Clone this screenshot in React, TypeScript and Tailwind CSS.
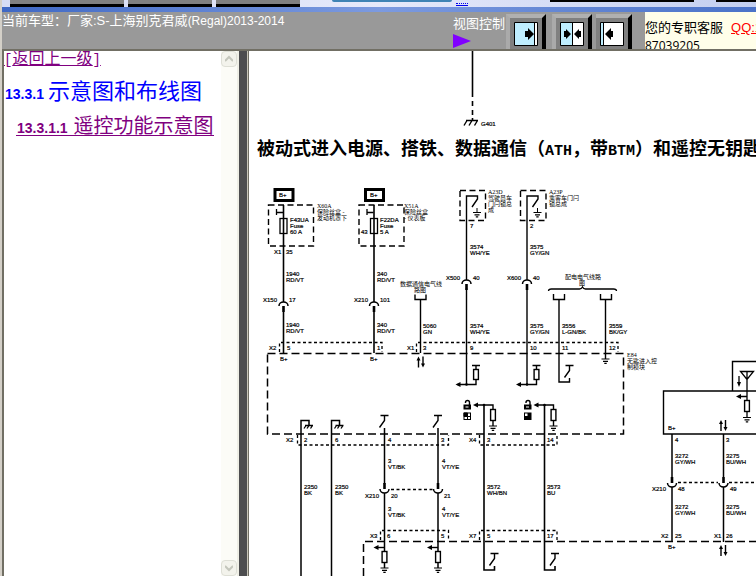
import React from "react";

const SANS = "font-['Liberation_Sans','Noto_Sans_CJK_SC',sans-serif]";

type P = { x: number; y: number };
type Label = [number, number, string];

const LABELS: Label[] = [
  [279, 197, "B+"], [370, 197, "B+"],
  [290, 222, "F43UA"], [290, 228, "Fuse"], [290, 234, "60 A"],
  [380, 222, "F22DA"], [380, 228, "Fuse"], [380, 234, "5 A"], [361, 234, "43"],
  [274, 254, "X1"], [286, 254, "35"],
  [286, 276, "1940"], [286, 282, "RD/VT"], [377, 276, "340"], [377, 282, "RD/VT"],
  [263, 302, "X150"], [289, 302, "17"], [354, 302, "X210"], [380, 302, "101"],
  [286, 327, "1940"], [286, 333, "RD/VT"], [377, 327, "340"], [377, 333, "RD/VT"],
  [269, 350, "X2"], [287, 350, "5"], [377, 350, "1"], [407, 350, "X1"], [423, 350, "3"],
  [280, 361, "B+"], [370, 361, "B+"],
  [423, 328, "5060"], [423, 334, "GN"],
  [470, 228, "7"], [530, 228, "2"],
  [470, 249, "3574"], [470, 255, "WH/YE"], [530, 249, "3575"], [530, 255, "GY/GN"],
  [446, 280, "X500"], [473, 280, "40"], [507, 280, "X600"], [533, 280, "40"],
  [470, 328, "3574"], [470, 334, "WH/YE"], [530, 328, "3575"], [530, 334, "GY/GN"],
  [562, 328, "3556"], [562, 334, "L-GN/BK"], [609, 328, "3559"], [609, 334, "BK/GY"],
  [470, 350, "9"], [530, 350, "10"], [562, 350, "11"], [609, 350, "12"],
  [286, 442, "X2"], [304, 442, "2"], [335, 442, "6"], [388, 442, "4"], [441, 442, "3"],
  [469, 442, "X4"], [487, 442, "3"], [547, 442, "14"],
  [304, 489, "2350"], [304, 495, "BK"], [335, 489, "2350"], [335, 495, "BK"],
  [388, 463, "3"], [388, 469, "VT/BK"], [442, 463, "4"], [442, 469, "VT/YE"],
  [365, 498, "X210"], [391, 498, "20"], [444, 498, "21"],
  [388, 511, "3"], [388, 517, "VT/BK"], [442, 511, "4"], [442, 517, "VT/YE"],
  [370, 538, "X3"], [387, 538, "6"], [441, 538, "5"],
  [487, 489, "3572"], [487, 495, "WH/BN"], [547, 489, "3573"], [547, 495, "BU"],
  [469, 538, "X7"], [487, 538, "5"], [547, 538, "17"],
  [668, 430, "B+"], [675, 442, "4"], [726, 442, "3"],
  [675, 458, "3272"], [675, 464, "GY/WH"], [726, 458, "3275"], [726, 464, "BU/WH"],
  [652, 491, "X210"], [678, 491, "48"], [730, 491, "49"],
  [675, 509, "3272"], [675, 515, "GY/WH"], [726, 509, "3275"], [726, 515, "BU/WH"],
  [661, 538, "X2"], [675, 538, "25"], [714, 538, "X1"], [726, 538, "26"], [668, 549, "B+"],
];

const NOTES: Label[] = [
  [317, 208, "X60A"], [317, 214, "保险丝盒 -"], [317, 220, "发动机罩下"],
  [404, 208, "X51A"], [404, 214, "保险丝盒"], [404, 220, "- 仪表板"],
  [400, 286, "数据通信电气线"], [414, 292, "路图"],
  [488, 194, "A23D"], [488, 200, "驾驶员车"], [488, 206, "门闩锁总"], [488, 212, "成"],
  [549, 194, "A23P"], [549, 200, "乘客车门闩"], [549, 206, "锁总成"],
  [565, 279, "配电电气线路"], [579, 285, "图"],
  [627, 357, "E84"], [627, 363, "无匙进入控"], [627, 369, "制模块"],
];

function Ground({ x, y }: P) {
  return <path d={`M${x - 4} ${y}h8M${x - 2.5} ${y + 2.3}h5M${x - 1.2} ${y + 4.4}h2.4`} strokeWidth="1.2" />;
}

function Chassis({ x, y }: P) {
  return <path d={`M${x - 4} ${y}h8M${x - 3} ${y}l-2 3M${x} ${y}l-2 3M${x + 3.5} ${y}l-2 3`} strokeWidth="1.3" />;
}

function Resistor({ x, y, h = 11 }: P & { h?: number }) {
  return <rect x={x - 2.4} y={y} width="4.8" height={h} fill="#fff" strokeWidth="1.4" />;
}

function ArrowLeft({ x, y }: P) {
  return <path d={`M${x} ${y}l5 -2.6v5.2z`} fill="#000" stroke="none" />;
}

function UpDown({ x, y }: P) {
  return (
    <g>
      <path d={`M${x} ${y + 11}v-8M${x + 4.5} ${y}v8`} strokeWidth="1.4" />
      <path d={`M${x} ${y}l2 4h-4zM${x + 4.5} ${y + 11}l2 -4h-4z`} fill="#000" stroke="none" />
    </g>
  );
}

/* Inline connector: socket above the pin. */
function SocketUp({ x, y }: P) {
  return (
    <g>
      <path d={`M${x - 4.5} ${y + 4}a4.5 4 0 0 1 9 0`} strokeWidth="1.5" />
      <path d={`M${x} ${y + 4}v6`} strokeWidth="2.6" />
    </g>
  );
}

/* Inline connector: pin above the socket. */
function SocketDown({ x, y }: P) {
  return (
    <g>
      <path d={`M${x - 4.5} ${y + 6}a4.5 4 0 0 0 9 0`} strokeWidth="1.5" />
      <path d={`M${x} ${y}v6`} strokeWidth="2.6" />
    </g>
  );
}

function Switch({ x, y }: P) {
  return <path d={`M${x - 4} ${y}h8M${x} ${y}v5l-5 7`} strokeWidth="1.4" />;
}

function FuseBox({ x }: { x: number }) {
  return (
    <g>
      <rect x={x - 8.5} y="189.5" width="18" height="11" strokeWidth="3" />
      <path d={`M${x - 15} 205h45v41h-45z`} strokeDasharray="6 3.5" strokeWidth="1.4" />
      <path d={`M${x - 7} 209v6M${x - 7} 212.5h6.5`} strokeWidth="1.3" />
      <rect x={x - 3.5} y="218.5" width="7" height="15" strokeWidth="1.3" />
      <path d={`M${x} 205v97`} strokeWidth="1.6" />
      <path d={`M${x} 312v41`} strokeWidth="1.6" />
      <SocketUp x={x} y={302} />
    </g>
  );
}

function LatchColumn({ x }: { x: number }) {
  return (
    <g>
      <path d={`M${x - 6.5} 190.5h25.5v30h-25.5z`} strokeDasharray="6 3.5" strokeWidth="1.4" />
      <path d={`M${x} 280V196h11v3l-5.500 8`} strokeWidth="1.4" />
      <path d={`M${x + 10.5} 208v5`} />
      <Ground x={x + 10.5} y={212.5} />
      <SocketUp x={x} y={280} />
      <path d={`M${x} 288v96.500M${x - 9} 384.500h18.500V366M${x + 5.500} 365.500h8`} strokeWidth="1.4" />
      <Resistor x={x + 9.5} y={369.5} h={10} />
      <ArrowLeft x={x - 11} y={384.5} />
      <circle cx={x} cy="384.5" r="1.3" fill="#000" stroke="none" />
    </g>
  );
}

function LockColumn({ x, alt }: { x: number; alt?: boolean }) {
  return (
    <g>
      <path d={`M${x - 8} 405h17v21`} strokeWidth="1.4" />
      <path d={`M${x} 405v165h10.500v-4`} strokeWidth="1.6" />
      <circle cx={x} cy="405" r="1.3" fill="#000" stroke="none" />
      <ArrowLeft x={x - 11} y={405} />
      <Resistor x={x + 9} y={409.5} />
      <Ground x={x + 9} y={426} />
      <Switch x={x + 10.5} y={553.5} />
      <path d={`M${x - 18.5} 403v-.5a2 2 0 0 1 4 0v3`} strokeWidth="1.4" />
      <rect x={x - 20.5} y="404.5" width="7.5" height="5" fill="#000" stroke="none" />
      <rect x={x - 18.5} y="406.5" width="3" height="1" fill="#fff" stroke="none" />
      <rect x={x - 20} y="413" width="6.5" height="6.5" />
      {alt ? (
        <path d={`M${x - 17} 413h3.500v6.500h-6.500v-3.500h3z`} fill="#000" stroke="none" />
      ) : (
        <path d={`M${x - 20} 413h3.500v3.500h-3.500zM${x - 16.5} 416.500v3M${x - 16.5} 416.500h3`} fill="#000" />
      )}
    </g>
  );
}

function SwitchColumn({ x }: { x: number }) {
  return (
    <g>
      <Switch x={x} y={415.5} />
      <path d={`M${x} 428v56M${x} 493v75`} strokeWidth="1.5" />
      <SocketDown x={x} y={483} />
      <path d={`M${x} 547.500h-7`} strokeWidth="1.4" />
      <ArrowLeft x={x - 11} y={547.5} />
      <Resistor x={x} y={551.5} />
      <Ground x={x} y={568} />
    </g>
  );
}

function WiringDiagram() {
  return (
    <svg className="block h-[396px] w-[507px] shrink-0" viewBox="249 180 507 396" fill="none" stroke="#000" strokeWidth="1" role="img" aria-label="遥控功能示意图">
      <FuseBox x={283.5} />
      <FuseBox x={374} />
      <LatchColumn x={466.5} />
      <LatchColumn x={527} />

      <path d="M415 294.500v5h11v-5M420.500 299.500V353" strokeWidth="1.4" />
      <path d="M553.500 294v5.500h11V294M600.500 294v5.500h11V294" strokeWidth="1.4" />
      <path d="M548.500 291q0 -2 3 -2h28q2 0 3 -2q1 2 3 2h28q3 0 3 2" strokeWidth="1.3" />
      <path d="M559 299.500V382h10.500v-4M605.500 299.500V359" strokeWidth="1.4" />
      <Switch x={569.5} y={365.5} />
      <Ground x={605.5} y={359} />

      <g strokeWidth="1.3" strokeDasharray="3 2.500">
        <path d="M279.500 352V342.500H382V352" />
        <path d="M416.500 352V342.500H618V352" />
        <path d="M297.500 435v10H448.500v-10" />
        <path d="M479.500 435v10H557v-10" />
        <path d="M380.500 540V530.500H448.500V540" />
        <path d="M479.500 540V530.500H557V540" />
        <path d="M391 489.500h43M678 482.500h40M729 482.500h27" />
      </g>
      <path d="M267.500 353.500H623.500V434H267.500z" strokeWidth="1.500" strokeDasharray="8 4" />
      <path d="M363.500 576V541.500H756" strokeWidth="1.500" strokeDasharray="8 4" />
      <UpDown x={418.5} y={356.5} />

      <path d="M301 576V420.500h8v5M331.500 576V420.500h8v5" strokeWidth="1.500" />
      <Chassis x={309} y={425.5} />
      <Chassis x={339.5} y={425.5} />
      <SwitchColumn x={384.5} />
      <SwitchColumn x={438} />
      <LockColumn x={484} />
      <LockColumn x={544.5} alt />

      <path d="M756 391H663.500V434H756M732.500 391V361.500H756" strokeWidth="1.400" />
      <path d="M740.500 371.500h13l-6.500 8zM747 371.500V417M747 396.500h-6" strokeWidth="1.300" />
      <path d="M739 376v6" strokeWidth="1.3" />
      <path d="M739 387l2 -5h-4z" fill="#000" stroke="none" />
      <ArrowLeft x={736} y={396.5} />
      <Resistor x={747} y={400.5} />
      <Ground x={747} y={417.5} />
      <UpDown x={721} y={420} />
      <UpDown x={721} y={545} />
      <path d="M672 434v43M672 487v55M723.500 434v43M723.500 487v55" strokeWidth="1.500" />
      <SocketDown x={672} y={477} />
      <SocketDown x={723.5} y={477} />

      <g className="font-['Liberation_Sans',sans-serif] text-[6px]" fill="#000" stroke="#000" strokeWidth="0.2">
        {LABELS.map(([x, y, s], i) => <text key={i} x={x} y={y}>{s}</text>)}
      </g>
      <g className="font-['Liberation_Serif','Noto_Sans_CJK_SC',serif] text-[6px]" fill="#000">
        {NOTES.map(([x, y, s], i) => <text key={i} x={x} y={y} stroke="none">{s}</text>)}
      </g>
    </svg>
  );
}

function TopStrip() {
  return (
    <div className="flex h-[7px] shrink-0 items-start overflow-hidden bg-linear-to-r from-[#d5dcf5] via-[#e6e9fa] to-[#c3cff0]">
      <button aria-label="菜单一" className="ml-2 h-[7px] w-[114px] border-b-3 border-black bg-[#808080]" />
      <button aria-label="菜单二" className="ml-1 h-[7px] w-[84px] border-b-3 border-black bg-[#808080]" />
      <button aria-label="菜单三" className="ml-1 h-[7px] w-[84px] border-b-3 border-black bg-[#808080]" />
      <span className="ml-8 h-[2px] w-[120px] rounded-b-lg bg-[#3f83b5]" />
      <a href="#more" aria-label="更多" className="ml-1 h-[6px] w-3 border-b border-[#0000ee]">
        <span className="mt-[3px] block border-b border-dotted border-[#0000ee]" />
      </a>
      <span className="ml-[82px] h-[2px] w-36 bg-black" />
      <span className="ml-[22px] h-[2px] flex-1 bg-black" />
    </div>
  );
}

function ViewButton({ label, narrow, children }: { label: string; narrow?: boolean; children: React.ReactNode }) {
  return (
    <button
      aria-label={label}
      className={`flex h-9 shrink-0 border-t-4 border-r-4 border-t-[#b0b0b0] border-r-black border-l-[#aaaaaa] bg-[#808080] pt-1 pl-1 ${narrow ? "-ml-0.5 w-9" : "w-10 border-l-4"}`}
    >
      <svg className="h-6 w-6 shrink-0" viewBox="0 0 24 24" fill="#000">
        {children}
      </svg>
    </button>
  );
}

function Toolbar() {
  return (
    <header className={`flex h-[37px] shrink-0 overflow-hidden bg-[#999999] text-[13px] text-white ${SANS}`}>
      <p className="min-w-0 flex-1 overflow-hidden leading-[18px] whitespace-nowrap">
        当前车型：厂家:S-上海别克君威<span className="text-[12px]">(Regal)2013-2014</span>
      </p>
      <div className="w-[53px] shrink-0 pt-1 leading-4 whitespace-nowrap">
        视图控制
        <svg className="mt-0.5 h-[14px] w-[18px]" viewBox="0 0 18 14" aria-hidden="true">
          <path d="M0 0L18 7L0 14z" fill="#8000ff" />
        </svg>
      </div>
      <div className="flex w-[139px] shrink-0 gap-1.5 pt-0.5">
        <ViewButton label="展开左栏">
          <path d="M.5 .5h23v23H.5z" fill="#fff" stroke="#000" />
          <path d="M1 1h19v22H1z" fill="#bfeeff" />
          <path d="M20 1h1v22h-1zM11 9h3V6l6 6l-6 6v-3h-3z" />
        </ViewButton>
        <ViewButton label="左右并排">
          <path d="M.5 .5h23v23H.5z" fill="#fff" stroke="#000" />
          <path d="M1 1h11v22H1z" fill="#bfeeff" />
          <path d="M12 1h1v22h-1zM4 9h2V7l5 5l-5 5v-2H4zM21 9h-2V7l-5 5l5 5v-2h2z" />
        </ViewButton>
        <ViewButton label="展开右栏" narrow>
          <path d="M.5 .5h23v23H.5z" fill="#fff" stroke="#000" />
          <path d="M1 1h2v22H1z" fill="#bfeeff" />
          <path d="M3 1h1v22H3zM13 9h-2V6l-6 6l6 6v-3h2z" />
        </ViewButton>
      </div>
      <div className="w-[111px] shrink-0 overflow-hidden bg-[#fffee9] pt-2 leading-4 whitespace-nowrap text-black">
        您的专职客服
        <a href="#qq" className="ml-2 text-[#ff0000] underline">QQ:1</a>
        <p className="mt-0.5 font-['Open_Sans',sans-serif] text-[12px] leading-4">87039205</p>
      </div>
    </header>
  );
}

function ScrollArrow({ label, down }: { label: string; down?: boolean }) {
  return (
    <button aria-label={label} className="flex h-4 w-4 items-center justify-center rounded-sm border border-[#dedfd6] bg-[#f3f3ec]">
      <svg className="h-2 w-2" viewBox="0 0 8 8" fill="none" stroke="#c4c6bc" strokeWidth="2">
        <path d={down ? "M0 2L4 6L8 2" : "M0 6L4 2L8 6"} />
      </svg>
    </button>
  );
}

function Sidebar() {
  return (
    <aside className="flex w-[237px] shrink-0 border-r-2 border-l-2 border-r-[#efefe6] border-l-[#716f64] bg-white">
      <nav className={`min-w-0 flex-1 overflow-hidden whitespace-nowrap ${SANS}`}>
        <a href="#back" className="block w-fit text-[16px] leading-4 text-[#800080] underline">
          <span className="font-['Liberation_Mono',monospace] text-[14px]">[</span>返回上一级<span className="font-['Liberation_Mono',monospace] text-[14px]">]</span>
        </a>
        <a href="#s1" className="mt-2.5 flex h-7 items-baseline gap-1 pl-px text-[22px] leading-7 text-[#0000ff]">
          <span className="text-[14px] font-bold">13.3.1</span>示意图和布线图
        </a>
        <a href="#s2" className="mt-2 ml-3 flex h-[22px] w-fit items-baseline gap-1.5 border-b border-[#800080] pl-px text-[20px] leading-6 text-[#800080]">
          <span className="text-[14px] font-bold">13.3.1.1</span>遥控功能示意图
        </a>
      </nav>
      <div className="flex w-4 shrink-0 flex-col justify-between bg-[#fcfcf7]">
        <ScrollArrow label="向上滚动" />
        <ScrollArrow label="向下滚动" down />
      </div>
    </aside>
  );
}

export default function App() {
  return (
    <div className="flex h-screen flex-col overflow-hidden border-l-2 border-[#d4d0c8] bg-white">
      <TopStrip />
      <div className="h-[5px] shrink-0 bg-linear-to-r from-[#3f68c4] via-[#7c9ae0] to-[#4a72c8]" />
      <Toolbar />
      <div className="flex min-h-0 flex-1 border-t-2 border-[#716f64]">
        <Sidebar />
        <div className="w-[9px] shrink-0 border-r border-[#c8c5b8] bg-[#4d4d4f]" />
        <main className="flex min-w-0 flex-1 flex-col overflow-hidden border-l border-[#716f64] bg-white">
          <svg className="h-[84px] w-[507px] shrink-0" viewBox="249 51 507 84" fill="none" stroke="#000" aria-hidden="true">
            <path d="M472.500 51v46" strokeWidth="1.600" />
            <path d="M472.500 101v5M472.500 110v11" strokeWidth="1.600" strokeDasharray="5 3" />
            <path d="M466 120.500h12M467 120.500l-3 5M472 120.500l-3 5M477.500 120.500l-3 5" strokeWidth="1.400" />
            <text x="481" y="126" className="font-['Liberation_Sans',sans-serif] text-[6px]" fill="#000" strokeWidth="0.2">G401</text>
          </svg>
          <h1 className="h-[45px] shrink-0 pt-0.5 pl-2 font-['Liberation_Serif','Noto_Sans_CJK_SC',serif] text-[18px] leading-6 font-bold whitespace-nowrap text-black">
            被动式进入电源、搭铁、数据通信（<span className="font-['Liberation_Mono',monospace] text-[15px]">ATH</span>，带<span className="font-['Liberation_Mono',monospace] text-[15px]">BTM</span>）和遥控无钥匙进入
          </h1>
          <WiringDiagram />
        </main>
      </div>
    </div>
  );
}
